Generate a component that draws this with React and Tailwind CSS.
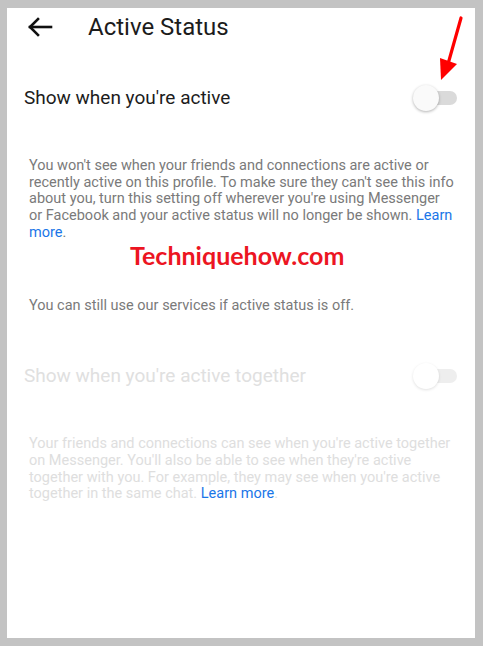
import React from 'react';

// Small switch in the "off" position: grey track with the white knob on the left
const Toggle = ({ faded = false }) => (
    <div className="relative w-[44px] h-[28px] shrink-0">
        <div className={`absolute right-0 top-[7px] w-[38px] h-[14px] rounded-full ${faded ? 'bg-[#eeeeee]' : 'bg-[#dadada]'}`} />
        <div className={`absolute left-0 top-[1px] w-[26px] h-[26px] rounded-full ${faded ? 'bg-white shadow-[0_1px_3px_rgba(0,0,0,0.12)]' : 'bg-[#fafafa] shadow-[0_1px_3px_rgba(0,0,0,0.3)]'}`} />
    </div>
);

const App = () => {
    return (
        <div className="w-[483px] h-[646px] bg-[#c3c3c3] pl-[7px] pr-[8px] py-[8px] font-['Roboto','Liberation_Sans',sans-serif]">
            <div className="relative w-full h-full bg-white flex flex-col">
                {/* header */}
                <div className="flex items-center h-[38px] pl-[20px]">
                    <svg width="26" height="20" viewBox="0 0 26 20" fill="none" stroke="#111" strokeWidth="2.6" strokeLinecap="square">
                        <path d="M3 10 H24" />
                        <path d="M11 2 L3 10 L11 18" />
                    </svg>
                    <h1 className="ml-[35px] text-[24px] text-[#1c1c1c] leading-none">Active Status</h1>
                </div>

                {/* show when active */}
                <div className="mt-[32px] flex items-center justify-between h-[40px] pl-[17px] pr-[18px]">
                    <span className="text-[19px] text-[#1c1c1c]">Show when you're active</span>
                    <Toggle />
                </div>

                <p className="mt-[40px] pl-[22px] pr-[21px] text-[14.5px] leading-[16.7px] text-[#7a7a7a]">
                    You won't see when your friends and connections are active or recently active on this profile. To make sure they can't see this info about you, turn this setting off wherever you're using Messenger or Facebook and your active status will no longer be shown. <span className="text-[#1a76e8]">Learn more</span>.
                </p>

                {/* watermark */}
                <div className="pl-[123px] text-[25px] leading-[26px] font-bold text-[#ec1522] font-['Lato','Open_Sans',sans-serif]">
                    Techniquehow.com
                </div>

                <p className="mt-[30px] pl-[22px] text-[14.5px] leading-[16.7px] text-[#7a7a7a]">
                    You can still use our services if active status is off.
                </p>

                {/* show when active together (disabled) */}
                <div className="mt-[42px] flex items-center justify-between h-[40px] pl-[17px] pr-[18px]">
                    <span className="text-[19px] text-[#e0e0e0]">Show when you're active together</span>
                    <Toggle faded />
                </div>

                <p className="mt-[40px] pl-[22px] pr-[21px] text-[14.5px] leading-[16.7px] text-[#dedede]">
                    Your friends and connections can see when you're active together on Messenger. You'll also be able to see when they're active together with you. For example, they may see when you're active together in the same chat. <span className="text-[#1a76e8]">Learn more</span>.
                </p>

                {/* red pointer arrow over the toggle */}
                <svg className="absolute left-[425px] top-[8px]" width="35" height="70" viewBox="0 0 35 70">
                    <path d="M29 2 L16 48" stroke="#ff0000" strokeWidth="3.2" strokeLinecap="round" />
                    <path d="M8 42 L25 48 L9 64 Z" fill="#ff0000" />
                </svg>
            </div>
        </div>
    );
};

export default App;
